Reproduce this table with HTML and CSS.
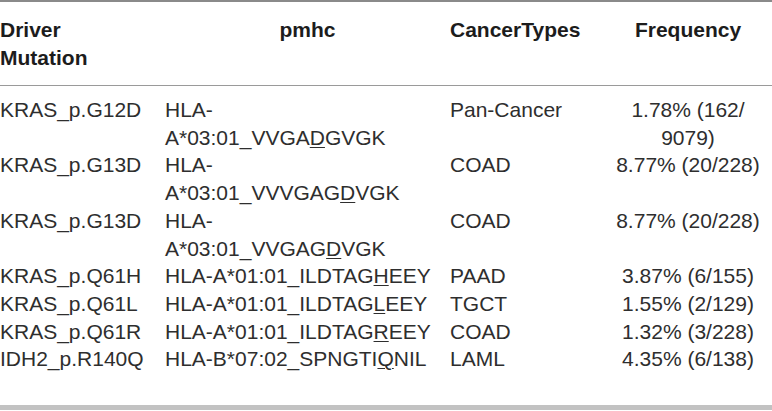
FILE: index.html
```html
<!DOCTYPE html>
<html>
<head>
<meta charset="utf-8">
<link rel="stylesheet" href="styles.css">
</head>
<body>
<table class="tbl">
  <colgroup>
    <col class="c1"><col class="c2"><col class="c3"><col class="c4">
  </colgroup>
  <thead>
    <tr>
      <th class="left">Driver<br>Mutation</th>
      <th class="center">pmhc</th>
      <th class="left">CancerTypes</th>
      <th class="center">Frequency</th>
    </tr>
  </thead>
  <tbody>
    <tr><td>KRAS_p.G12D</td><td>HLA-<br>A*03:01_VVGA<u>D</u>GVGK</td><td>Pan-Cancer</td><td class="center">1.78% (162/<br>9079)</td></tr>
    <tr><td>KRAS_p.G13D</td><td>HLA-<br>A*03:01_VVVGAG<u>D</u>VGK</td><td>COAD</td><td class="center">8.77% (20/228)</td></tr>
    <tr><td>KRAS_p.G13D</td><td>HLA-<br>A*03:01_VVGAG<u>D</u>VGK</td><td>COAD</td><td class="center">8.77% (20/228)</td></tr>
    <tr><td>KRAS_p.Q61H</td><td>HLA-A*01:01_ILDTAG<u>H</u>EEY</td><td>PAAD</td><td class="center">3.87% (6/155)</td></tr>
    <tr><td>KRAS_p.Q61L</td><td>HLA-A*01:01_ILDTAG<u>L</u>EEY</td><td>TGCT</td><td class="center">1.55% (2/129)</td></tr>
    <tr><td>KRAS_p.Q61R</td><td>HLA-A*01:01_ILDTAG<u>R</u>EEY</td><td>COAD</td><td class="center">1.32% (3/228)</td></tr>
    <tr><td>IDH2_p.R140Q</td><td>HLA-B*07:02_SPNGTI<u>Q</u>NIL</td><td>LAML</td><td class="center">4.35% (6/138)</td></tr>
  </tbody>
</table>
</body>
</html>
```
FILE: styles.css
```css
html, body {
  margin: 0;
  padding: 0;
  background: #ffffff;
}
body {
  width: 772px;
  font-family: "Liberation Sans", Arial, sans-serif;
  font-size: 21px;
  color: #2e2e2e;
}
.tbl {
  width: 772px;
  border-collapse: collapse;
  table-layout: fixed;
  border-top: 2px solid #8a8a8a;
  border-bottom: 5px solid #c2c2c2;
}
.c1 { width: 165px; }
.c2 { width: 285px; }
.c3 { width: 160px; }
.c4 { width: 162px; }
th, td {
  padding: 0;
  vertical-align: top;
  text-align: left;
  white-space: nowrap;
}
th {
  font-weight: bold;
  color: #1c1c1c;
  line-height: 28px;
}
td {
  line-height: 27.7px;
}
thead th {
  padding-top: 14px;
  padding-bottom: 13px;
  border-bottom: 1px solid #9a9a9a;
}
th.center, td.center {
  text-align: center;
}
td.center {
  padding-right: 6px;
}
th.center:last-child {
  padding-right: 6px;
}
tbody tr:first-child td {
  padding-top: 10px;
}
tbody tr:last-child td {
  padding-bottom: 32px;
}
u {
  text-decoration-thickness: 1px;
  text-underline-offset: 2px;
}
```
